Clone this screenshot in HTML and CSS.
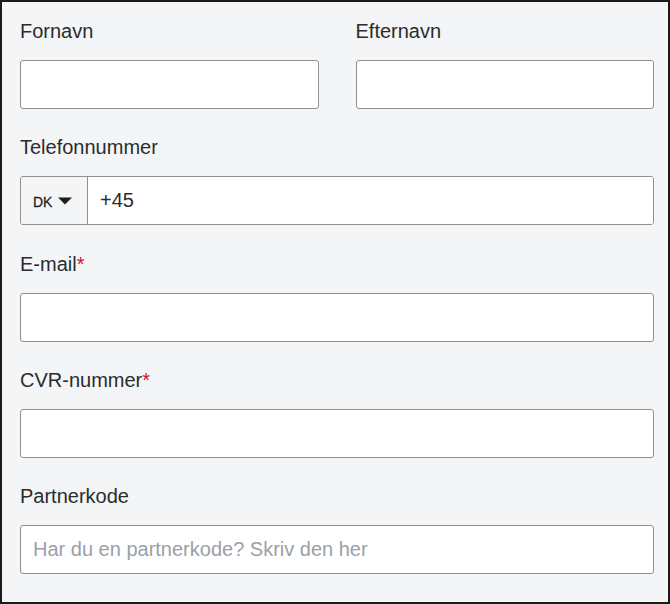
FILE: index.html
```html
<!DOCTYPE html>
<html lang="da">
<head>
<meta charset="utf-8">
<title>Kontaktoplysninger</title>
<link rel="stylesheet" href="styles.css">
</head>
<body>
<form class="signup">
  <div class="row-split">
    <div class="field">
      <label class="label" for="fornavn">Fornavn</label>
      <input class="input" id="fornavn" type="text">
    </div>
    <div class="field">
      <label class="label" for="efternavn">Efternavn</label>
      <input class="input" id="efternavn" type="text">
    </div>
  </div>

  <div class="field">
    <label class="label" for="telefon">Telefonnummer</label>
    <div class="phone">
      <button type="button" class="country">
        <span class="country-code">DK</span>
        <svg class="caret" width="14" height="8" viewBox="0 0 14 8" aria-hidden="true"><path d="M0 0.5h14L7 7.5z" fill="#1f1f1f"/></svg>
      </button>
      <input class="phone-input" id="telefon" type="tel" value="+45">
    </div>
  </div>

  <div class="field">
    <label class="label" for="email">E-mail<span class="req">*</span></label>
    <input class="input" id="email" type="email">
  </div>

  <div class="field">
    <label class="label" for="cvr">CVR-nummer<span class="req">*</span></label>
    <input class="input" id="cvr" type="text">
  </div>

  <div class="field">
    <label class="label" for="partner">Partnerkode</label>
    <input class="input" id="partner" type="text" placeholder="Har du en partnerkode? Skriv den her">
  </div>
</form>
</body>
</html>
```
FILE: styles.css
```css
* {
  box-sizing: border-box;
}

html,
body {
  margin: 0;
  padding: 0;
  background: #f4f5f7;
}

.signup {
  width: 670px;
  height: 604px;
  border: 2px solid #1b1b1b;
  background: #f4f5f7;
  padding: 17px 14px 0 18px;
  font-family: "Liberation Sans", Arial, sans-serif;
  font-size: 20px;
  color: #2a2c2e;
}

.row-split {
  display: grid;
  grid-template-columns: 1fr 1fr;
  column-gap: 37px;
}

.field {
  display: flex;
  flex-direction: column;
  margin-bottom: 26.25px;
}

.label {
  display: block;
  line-height: 24px;
  margin-bottom: 17px;
}

.req {
  color: #d0102b;
}

.input,
.phone {
  height: 49px;
  width: 100%;
  border: 1px solid #8f8f8f;
  border-radius: 3px;
  background: #fff;
}

.input {
  padding: 0 12px;
  font: inherit;
  color: #2a2c2e;
  outline: none;
}

.input::placeholder {
  color: #9aa0a8;
  opacity: 1;
}

.phone {
  display: flex;
  overflow: hidden;
}

.country {
  width: 67px;
  flex: none;
  display: flex;
  align-items: center;
  gap: 6px;
  padding: 0 0 0 12px;
  margin: 0;
  border: 0;
  border-right: 1px solid #8f8f8f;
  background: #f4f5f7;
  font-family: "Liberation Sans", Arial, sans-serif;
  font-size: 14px;
  font-weight: 400;
  color: #1f1f1f;
}

.country-code {
  padding-top: 2px;
  -webkit-text-stroke: 0.3px #1f1f1f;
}

.caret {
  display: block;
}

.phone-input {
  flex: 1;
  min-width: 0;
  border: 0;
  padding: 0 12px;
  font: inherit;
  color: #2a2c2e;
  background: #fff;
  outline: none;
}
```
